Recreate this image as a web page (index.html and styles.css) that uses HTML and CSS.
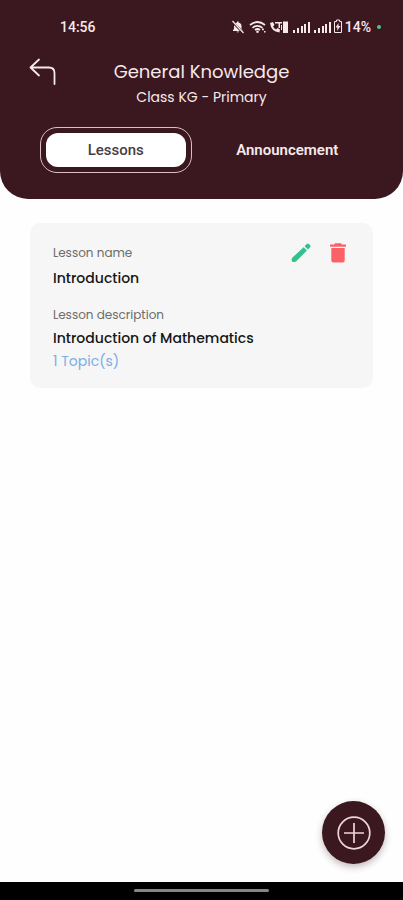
FILE: index.html
```html
<!DOCTYPE html>
<html lang="en">
<head>
<meta charset="utf-8">
<meta name="viewport" content="width=device-width, initial-scale=1">
<title>General Knowledge</title>
<link rel="stylesheet" href="styles.css">
</head>
<body>
<div class="app">
  <header class="header">
    <div class="status">
      <time class="clock">14:56</time>
      <div class="indicators">
        <svg width="114" height="16" viewBox="0 0 114 16" fill="currentColor" aria-hidden="true">
          <path d="M2 12V11l1-1V7q0-3 3-3.500V2.500h1.500V3.500q3 .5 3 3.500v3l1 1v1zM5.500 12.500h2.500q-1 2-2.500 0z"/>
          <path d="M1 2.500l11 11" stroke="#3b171f" stroke-width="2.400"/>
          <path d="M1.500 2l11 12" stroke="currentColor" stroke-width="1.200"/>
          <path d="M19 6q7.500-6 15 0M21.500 8.800q5-4 10 0M24 11q2.500-2 5 0" fill="none" stroke="currentColor" stroke-width="1.700"/>
          <circle cx="26.500" cy="12.800" r="1.300"/>
          <path d="M31 9.500h1.800v1.800H31zM33 12h1.500v1.500H33z"/>
          <path d="M39 4l3-1 1.500 3-1.500 1.500q1 2 3 3l1.500-1.500 2.500 1.500-.5 3q-8.500-1-9.500-9.500z"/>
          <path d="M44 3h7v1.500h-2V9h-1.500V4.500H44zM52 2.500h5V14h-5zM50 6h1v5h-1z"/>
          <path d="M62 11h2v3h-2zM66 9h2v5h-2zM70 7h2v7h-2zM73 5h2v9h-2zM77 3h2v11h-2z"/>
          <path d="M83 11h2v3h-2zM87 9h2v5h-2zM91 7h2v7h-2zM94 5h2v9h-2zM98 3h2v11h-2z"/>
          <path d="M105.500 2.500h-2v11h7v-11h-2V1h-3z" fill="none" stroke="currentColor"/>
          <path d="M107.500 4l-3 4.500h2l-.5 3.500 3.500-5h-2z"/>
        </svg>
        <span>14%</span>
        <i class="dot"></i>
      </div>
    </div>
    <div class="titlebar">
      <button class="back" aria-label="Back">
        <svg width="28" height="28" viewBox="0 0 28 28" fill="none" stroke="currentColor" stroke-width="1.800" stroke-linecap="round" stroke-linejoin="round" aria-hidden="true"><path d="M10 1.500L1.500 9.500L10 17.500M1.500 9.500H20Q25.500 9.500 25.500 15V26"/></svg>
      </button>
      <div class="titles">
        <h1>General Knowledge</h1>
        <p>Class KG - Primary</p>
      </div>
    </div>
    <nav class="tabs">
      <button class="tab active"><span>Lessons</span></button>
      <button class="tab"><span>Announcement</span></button>
    </nav>
  </header>
  <main class="content">
    <article class="card">
      <div class="card-top">
        <p class="label">Lesson name</p>
        <div class="actions">
          <button class="edit" aria-label="Edit lesson"><svg width="20" height="20" viewBox="0 0 20 20" fill="currentColor" aria-hidden="true"><path d="M1.500 14.500L12.600 4.300l3.300 3.300L5.500 18q-.9.900-2 .9H2q-1.300 0-1.300-1.300V16q0-.9.800-1.500zM13.600 3.300L15.800 1q1-.9 2 0l1.300 1.300q1 1 0 2l-2.200 2.300z"/></svg></button>
          <button class="delete" aria-label="Delete lesson"><svg width="16" height="20" viewBox="0 0 16 20" fill="currentColor" aria-hidden="true"><path d="M0 1.500h4l1-1.200h6l1 1.200h4v2.200H0zM1.300 5h13.400v12.500q0 2-2 2H3.300q-2 0-2-2z"/></svg></button>
        </div>
      </div>
      <h2>Introduction</h2>
      <p class="label description">Lesson description</p>
      <h2>Introduction of Mathematics</h2>
      <a class="topics" href="#">1 Topic(s)</a>
    </article>
  </main>
  <footer class="footer">
    <button class="add" aria-label="Add lesson"><svg width="34" height="34" viewBox="0 0 34 34" fill="none" stroke="currentColor" stroke-width="1.700" aria-hidden="true"><circle cx="17" cy="17" r="15.800"/><path d="M17 7v20M7 17h20"/></svg></button>
    <div class="system-nav"><i></i></div>
  </footer>
</div>
</body>
</html>
```
FILE: styles.css
```css
* { box-sizing: border-box; }
body, h1, h2, p { margin: 0; }
body {
  font-family: Poppins, Inter, sans-serif;
  background: #fefefe;
  color: #151515;
}
button {
  padding: 0;
  border: 0;
  background: none;
  color: inherit;
  font: inherit;
}
svg { display: block; }
.app {
  min-height: 100vh;
  display: flex;
  flex-direction: column;
}
.header {
  background: #3b171f;
  color: #f6e9eb;
  border-radius: 0 0 28px 28px;
  padding-bottom: 26px;
}
.status {
  height: 54px;
  padding: 0 22px 0 60px;
  display: flex;
  align-items: center;
  justify-content: space-between;
  font: 500 14px/20px Roboto, sans-serif;
}
.indicators { display: flex; align-items: center; }
.dot {
  width: 4px;
  height: 4px;
  margin-left: 6px;
  border-radius: 50%;
  background: #4fc48b;
}
.titlebar {
  display: grid;
  grid-template-columns: 28px 1fr 28px;
  align-items: start;
  padding: 4px 29px 0;
}
.titles { text-align: center; }
.titles h1 { font-size: 18px; line-height: 28px; font-weight: 400; white-space: nowrap; }
.titles p { font-size: 14px; line-height: 22px; }
.tabs {
  display: grid;
  grid-template-columns: 1fr 1fr;
  gap: 20px;
  padding: 19px 40px 0;
}
.tab {
  height: 46px;
  padding: 5px;
  border: 1px solid transparent;
  border-radius: 17px;
  font: 600 15px/20px Roboto, sans-serif;
}
.tab span {
  height: 34px;
  display: grid;
  place-items: center;
  border-radius: 12px;
}
.active { border-color: #d9bfc4; font-weight: 500; }
.active span { background: #fff; color: #454045; }
.content { flex: 1; padding: 24px 30px; }
.card {
  background: #f6f6f6;
  border-radius: 10px;
  padding: 19px 27px 16px 23px;
}
.card-top { display: flex; justify-content: space-between; align-items: center; }
.actions { display: flex; gap: 19px; }
.edit { color: #35bf8b; }
.delete { color: #fb6267; }
.label { font-size: 12px; line-height: 22px; color: #6c6c6c; }
.description { margin-top: 14px; }
.card h2 { font-size: 14px; line-height: 24px; font-weight: 500; }
.card-top + h2 { padding-top: 2px; }
.topics { display: block; font-size: 14px; line-height: 22px; color: #7baee6; text-decoration: none; }
.footer { position: sticky; bottom: 0; }
.add {
  display: grid;
  place-items: center;
  width: 63px;
  height: 63px;
  margin: 0 18px 18px auto;
  border-radius: 50%;
  background: #3b171f;
  color: #eed6da;
  box-shadow: 0 3px 7px rgba(59, 23, 31, .3);
}
.system-nav {
  height: 18px;
  background: #000;
  display: flex;
  justify-content: center;
  padding-top: 7px;
}
.system-nav i { width: 33.3%; height: 3px; border-radius: 2px; background: #858585; }
```
